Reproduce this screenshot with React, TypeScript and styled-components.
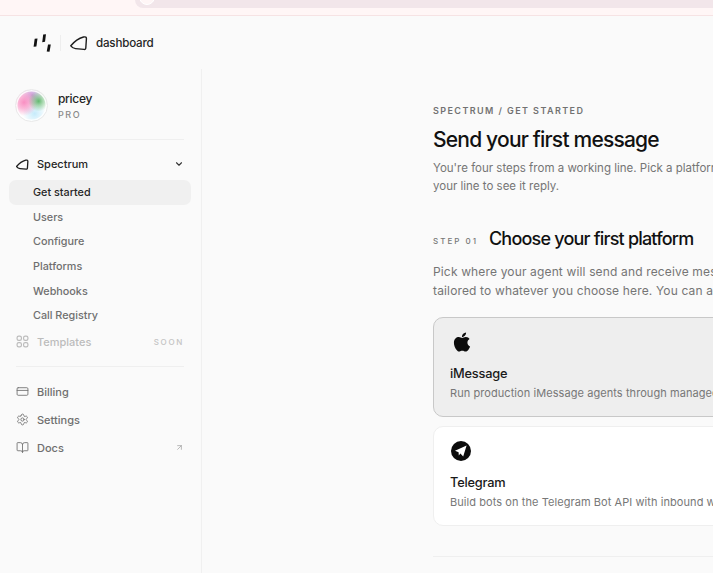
import React from "react";
import styled, { createGlobalStyle } from "styled-components";
import { ArrowUpRight, BookOpen, ChevronDown, CreditCard, Settings } from "lucide-react";
import { FaApple } from "react-icons/fa";

const GlobalStyle = createGlobalStyle`
  html, body {
    margin: 0;
    height: 100%;
    overflow: hidden;
    background: #fafafa;
    font-family: Inter, "Liberation Sans", sans-serif;
  }
  #root { height: 100%; }
`;

const Page = styled.div`
  width: 713px;
  height: 573px;
  overflow: hidden;
  display: flex;
  flex-direction: column;
`;

const Banner = styled.div`
  flex: none;
  height: 15px;
  background: #fff6f6;
  border-bottom: 1px solid #f6e3e4;
  box-sizing: content-box;
  padding-left: 135px;
`;

const BannerPill = styled.div`
  height: 8px;
  background: #f2e6ea;
  border-radius: 0 0 0 9px;
  position: relative;
  overflow: hidden;

  &::before {
    content: "";
    position: absolute;
    left: 4px;
    top: -11px;
    width: 14px;
    height: 14px;
    border-radius: 50%;
    background: #fff6f6;
    border: 1px solid #fff;
  }
`;

const TopBar = styled.header`
  flex: none;
  height: 53px;
  display: flex;
  align-items: center;
  padding-left: 33px;
`;

const Separator = styled.span`
  width: 1px;
  height: 16px;
  background: #eeeeee;
  margin: 0 9px 0 9px;
`;

const BrandName = styled.span`
  font-size: 11.6px;
  font-weight: 500;
  color: #262626;
  letter-spacing: -0.2px;
  margin-left: 8px;
`;

const Body = styled.div`
  flex: 1;
  display: flex;
  min-height: 0;
`;

const Sidebar = styled.aside`
  flex: none;
  width: 201px;
  box-sizing: content-box;
  border-right: 1px solid #f0f0f0;
  padding-top: 19px;
`;

const Profile = styled.div`
  display: flex;
  align-items: center;
  gap: 10px;
  padding-left: 15px;
  height: 35px;
`;

const Avatar = styled.div`
  width: 33px;
  height: 33px;
  border-radius: 50%;
  border: 1px solid #e9e9e9;
  box-sizing: border-box;
  box-shadow: inset 0 0 0 1.5px rgba(255, 255, 255, 0.85);
  background:
    radial-gradient(circle at 73% 36%, #62b96f 0, rgba(98, 185, 111, 0.55) 14%, rgba(98, 185, 111, 0) 34%),
    radial-gradient(circle at 26% 40%, #f98fc2 0, rgba(249, 143, 194, 0.6) 22%, rgba(249, 143, 194, 0) 46%),
    radial-gradient(circle at 52% 16%, #c7a0dc 0, rgba(199, 160, 220, 0) 36%),
    radial-gradient(circle at 60% 76%, #c6ebfb 0, rgba(198, 235, 251, 0) 40%),
    #ffffff;
`;

const ProfileText = styled.div`
  display: flex;
  flex-direction: column;
  gap: 2px;
  padding-bottom: 1px;
`;

const ProfileName = styled.span`
  font-size: 12px;
  font-weight: 500;
  line-height: 16px;
  color: #262626;
  letter-spacing: -0.3px;
`;

const Plan = styled.span`
  font-size: 9px;
  font-weight: 500;
  line-height: 11px;
  letter-spacing: 1.6px;
  color: #8a8a8a;
`;

const Divider = styled.div<{ $top: number; $bottom: number }>`
  height: 1px;
  background: #efefef;
  margin: ${(p) => p.$top}px 17px ${(p) => p.$bottom}px 16px;
`;

const NavRow = styled.div<{ $tone?: "dark" | "mid" | "faint" }>`
  height: 28px;
  display: flex;
  align-items: center;
  gap: 8px;
  padding: 0 17px 0 16px;
  font-size: 11px;
  font-weight: 500;
  color: ${(p) => (p.$tone === "dark" ? "#262626" : p.$tone === "faint" ? "#bcbcbc" : "#6f6f6f")};
`;

const Spacer = styled.span`
  flex: 1;
`;

const SubList = styled.div`
  display: flex;
  flex-direction: column;
  margin: 2px 10px 0 9px;
`;

const SubItem = styled.div<{ $active?: boolean }>`
  height: ${(p) => (p.$active ? 25 : 24.6)}px;
  display: flex;
  align-items: center;
  padding-left: 24px;
  border-radius: 7px;
  font-size: 10.8px;
  font-weight: 500;
  color: ${(p) => (p.$active ? "#262626" : "#6f6f6f")};
  background: ${(p) => (p.$active ? "#f0f0f0" : "transparent")};
`;

const SoonTag = styled.span`
  font-size: 8px;
  font-weight: 500;
  letter-spacing: 1.7px;
  color: #c4c4c4;
`;

const Main = styled.main`
  flex: 1;
  min-width: 0;
  padding: 36px 0 0 231px;
  white-space: nowrap;
`;

const Eyebrow = styled.div`
  font-size: 9px;
  font-weight: 600;
  line-height: 12px;
  letter-spacing: 1.42px;
  color: #727272;
`;

const Title = styled.h1`
  margin: 8px 0 0;
  font-size: 21px;
  line-height: 30px;
  font-weight: 500;
  letter-spacing: -0.8px;
  color: #111111;
`;

const Lead = styled.p`
  margin: 4px 0 0;
  font-size: 11.5px;
  line-height: 18px;
  color: #757575;
`;

const StepHead = styled.div`
  margin-top: 30px;
  height: 28px;
  display: flex;
  align-items: center;
  gap: 11px;
`;

const StepTag = styled.span`
  font-size: 8px;
  font-weight: 500;
  letter-spacing: 2px;
  color: #777777;
  padding-top: 3px;
`;

const StepTitle = styled.h2`
  margin: 0;
  font-size: 18px;
  line-height: 26px;
  font-weight: 500;
  letter-spacing: -0.8px;
  color: #111111;
`;

const StepText = styled.p`
  margin: 9px 0 0;
  font-size: 12px;
  line-height: 19px;
  letter-spacing: 0.15px;
  color: #757575;
`;

const CardList = styled.div`
  margin-top: 17px;
  width: 700px;
  display: flex;
  flex-direction: column;
  gap: 9px;
`;

const Card = styled.div<{ $selected?: boolean }>`
  height: 100px;
  box-sizing: border-box;
  padding: 13px 16px 0;
  border-radius: 10px;
  border: 1px solid ${(p) => (p.$selected ? "#c8c8c8" : "#efefef")};
  background: ${(p) => (p.$selected ? "#eeeeee" : "#ffffff")};
`;

const CardIcon = styled.div`
  height: 22px;
  display: flex;
  align-items: center;
  padding-left: 1px;
  color: #0c0c0c;
`;

const CardName = styled.div`
  margin-top: 12px;
  font-size: 12.8px;
  line-height: 18px;
  font-weight: 500;
  letter-spacing: -0.2px;
  color: #1a1a1a;
`;

const CardText = styled.div`
  margin-top: 2px;
  font-size: 11px;
  line-height: 16px;
  letter-spacing: 0.07px;
  color: #777777;
`;

const FootRule = styled.div`
  width: 700px;
  height: 1px;
  margin-top: 30px;
  background: #efefef;
`;

const LogoMark = () => (
  <svg width="18" height="18" viewBox="0 0 18 18" fill="#111">
    <path d="M1.7 4.8 4.5 4.4 3.4 12.4 0.6 12.8Z" />
    <path d="M10.2 0.6 13 0.2 12 7.8 9.2 8.2Z" />
    <path d="M15 10.4 17.8 10.4 16.5 17.8 13.7 17.6Z" />
  </svg>
);

const SpectrumGlyph = ({ size, width = 1.4 }: { size: number; width?: number }) => (
  <svg width={size} height={size} viewBox="0 0 18 18" fill="none" stroke="#1c1c1c" strokeWidth={width} strokeLinejoin="round">
    <path d="M0.8 11.8 C3.5 8.5 8 4.5 13.5 3 C15.6 2.5 16.6 3.2 16.4 5 L15.8 14 C15.7 15.2 15 15.6 14 15.4 L5.5 14.6 C3.5 14.4 2 13.4 0.8 11.8Z" />
  </svg>
);

const TemplatesGlyph = () => (
  <svg width="13" height="13" viewBox="0 0 12 12" fill="none" stroke="#bcbcbc" strokeWidth="1.1">
    <rect x="1" y="1" width="4" height="4" rx="1.5" />
    <rect x="7" y="1" width="4" height="4" rx="1.5" />
    <rect x="1" y="7" width="4" height="4" rx="1.5" />
    <rect x="7" y="7" width="4" height="4" rx="1.5" />
  </svg>
);

const TelegramGlyph = () => (
  <svg width="20" height="20" viewBox="0 0 20 20">
    <circle cx="10" cy="10" r="10" fill="#0c0c0c" />
    <path d="M4 9.8 15.6 4.6 12.2 15.6 9.4 12.4 7.8 14.4 7.6 11.2Z" fill="#fff" />
  </svg>
);

const subItems = ["Users", "Configure", "Platforms", "Webhooks", "Call Registry"];

export default function App() {
  return (
    <Page>
      <GlobalStyle />
      <Banner>
        <BannerPill />
      </Banner>
      <TopBar>
        <LogoMark />
        <Separator />
        <SpectrumGlyph size={18} />
        <BrandName>dashboard</BrandName>
      </TopBar>
      <Body>
        <Sidebar>
          <Profile>
            <Avatar />
            <ProfileText>
              <ProfileName>pricey</ProfileName>
              <Plan>PRO</Plan>
            </ProfileText>
          </Profile>
          <Divider $top={16} $bottom={10} />
          <NavRow $tone="dark">
            <SpectrumGlyph size={13} width={1.8} />
            Spectrum
            <Spacer />
            <ChevronDown size={10} strokeWidth={2.6} color="#333" />
          </NavRow>
          <SubList>
            <SubItem $active>Get started</SubItem>
            {subItems.map((item) => (
              <SubItem key={item}>{item}</SubItem>
            ))}
          </SubList>
          <NavRow $tone="faint">
            <TemplatesGlyph />
            Templates
            <Spacer />
            <SoonTag>SOON</SoonTag>
          </NavRow>
          <Divider $top={10} $bottom={11} />
          <NavRow>
            <CreditCard size={13} strokeWidth={1.6} />
            Billing
          </NavRow>
          <NavRow>
            <Settings size={13} strokeWidth={1.6} />
            Settings
          </NavRow>
          <NavRow>
            <BookOpen size={13} strokeWidth={1.6} />
            Docs
            <Spacer />
            <ArrowUpRight size={9} strokeWidth={1.8} color="#9a9a9a" />
          </NavRow>
        </Sidebar>
        <Main>
          <Eyebrow>SPECTRUM / GET STARTED</Eyebrow>
          <Title>Send your first message</Title>
          <Lead>
            You're four steps from a working line. Pick a platform, connect an agent, and message
            <br />
            your line to see it reply.
          </Lead>
          <StepHead>
            <StepTag>STEP 01</StepTag>
            <StepTitle>Choose your first platform</StepTitle>
          </StepHead>
          <StepText>
            Pick where your agent will send and receive messages. The next steps are
            <br />
            tailored to whatever you choose here. You can add more platforms later.
          </StepText>
          <CardList>
            <Card $selected>
              <CardIcon>
                <FaApple size={22} />
              </CardIcon>
              <CardName>iMessage</CardName>
              <CardText>Run production iMessage agents through managed lines and numbers.</CardText>
            </Card>
            <Card>
              <CardIcon>
                <TelegramGlyph />
              </CardIcon>
              <CardName>Telegram</CardName>
              <CardText>Build bots on the Telegram Bot API with inbound webhooks.</CardText>
            </Card>
          </CardList>
          <FootRule />
        </Main>
      </Body>
    </Page>
  );
}
